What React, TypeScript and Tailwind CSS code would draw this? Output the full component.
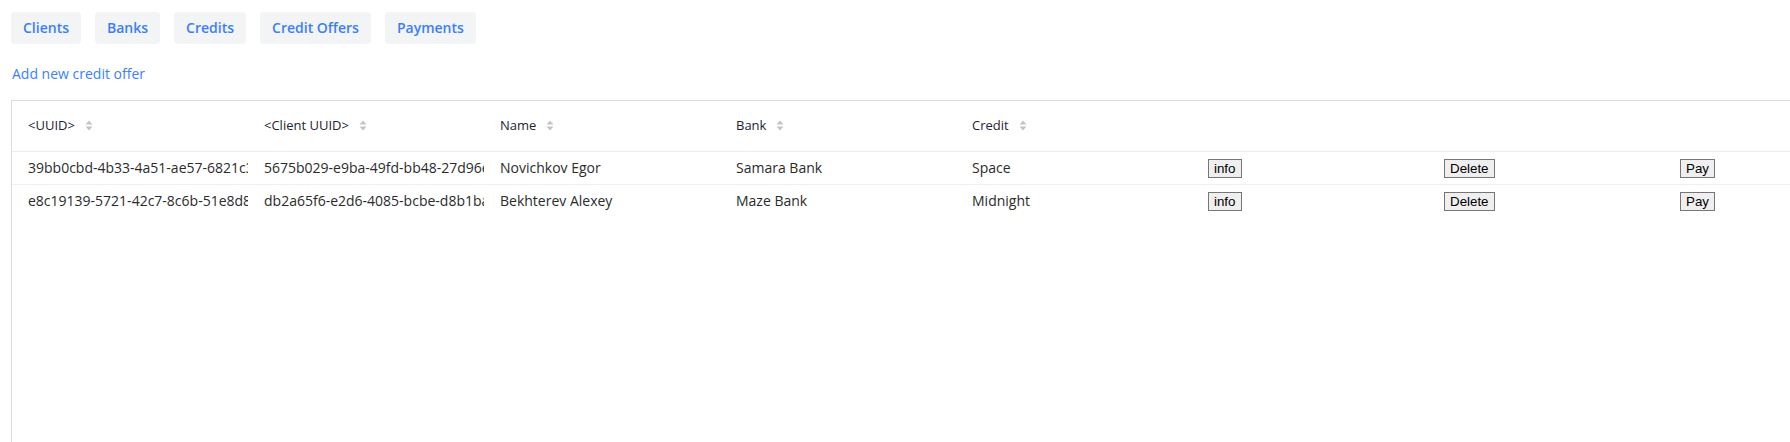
type Offer = {
  uuid: string
  clientUuid: string
  name: string
  bank: string
  credit: string
}

const offers: Offer[] = [
  {
    uuid: "39bb0cbd-4b33-4a51-ae57-6821c3a1f0d2",
    clientUuid: "5675b029-e9ba-49fd-bb48-27d96e3c4b1a",
    name: "Novichkov Egor",
    bank: "Samara Bank",
    credit: "Space",
  },
  {
    uuid: "e8c19139-5721-42c7-8c6b-51e8d8f2a7c4",
    clientUuid: "db2a65f6-e2d6-4085-bcbe-d8b1ba90e3f7",
    name: "Bekhterev Alexey",
    bank: "Maze Bank",
    credit: "Midnight",
  },
]

const navItems = ["Clients", "Banks", "Credits", "Credit Offers", "Payments"]
const columns = ["<UUID>", "<Client UUID>", "Name", "Bank", "Credit"]

function SortIcon() {
  return (
    <svg width="8" height="11" viewBox="0 0 8 11" className="ml-[10px] shrink-0">
      <path d="M4 0.5 L7.5 4.5 L0.5 4.5 Z" fill="#c4c4c4" />
      <path d="M4 10.5 L7.5 6.5 L0.5 6.5 Z" fill="#c4c4c4" />
    </svg>
  )
}

function PlainButton({ label }: { label: string }) {
  return (
    <button className="bg-[#efefef] border border-[#767676] px-[5px] py-px text-[13.33px] leading-[15px] text-black font-['Liberation_Sans',Arial,sans-serif]">
      {label}
    </button>
  )
}

export default function App() {
  return (
    <div className="h-[442px] overflow-hidden bg-white font-['Segoe_UI','Open_Sans',sans-serif]">
      <div className="pl-[11px] pt-[12px]">
        <nav className="flex gap-[14px]">
          {navItems.map((item) => (
            <button
              key={item}
              className="h-8 px-3 rounded bg-[#f3f4f6] text-sm font-semibold text-[#3b7ff6]"
            >
              {item}
            </button>
          ))}
        </nav>

        <div className="mt-[20px] pl-px text-sm leading-5">
          <a className="block w-fit text-[#3b82f6] cursor-pointer">Add new credit offer</a>
        </div>

        <div className="mt-[16px] w-[1900px] h-[400px] border-l border-t border-[#dcdcdc]">
          <table className="table-fixed w-[1888px] border-collapse">
            <colgroup>
              {Array.from({ length: 8 }).map((_, i) => (
                <col key={i} className="w-[236px]" />
              ))}
            </colgroup>
            <thead>
              <tr className="border-b border-[#ededed]">
                {columns.map((c) => (
                  <th key={c} className="h-[50px] px-4 text-left font-normal text-[13px] text-[#1d2433]">
                    <div className="flex items-center">
                      <span>{c}</span>
                      <SortIcon />
                    </div>
                  </th>
                ))}
                <th />
                <th />
                <th />
              </tr>
            </thead>
            <tbody className="divide-y divide-[#f0f0f0]">
              {offers.map((o) => (
                <tr key={o.uuid} className="text-sm text-[#2b2b2b]">
                  <td className="px-4 py-[6px] leading-5 whitespace-nowrap overflow-hidden">{o.uuid}</td>
                  <td className="px-4 py-[6px] leading-5 whitespace-nowrap overflow-hidden">{o.clientUuid}</td>
                  <td className="px-4 py-[6px] leading-5 whitespace-nowrap overflow-hidden">{o.name}</td>
                  <td className="px-4 py-[6px] leading-5 whitespace-nowrap overflow-hidden">{o.bank}</td>
                  <td className="px-4 py-[6px] leading-5 whitespace-nowrap overflow-hidden">{o.credit}</td>
                  <td className="px-4 py-[6px]">
                    <PlainButton label="info" />
                  </td>
                  <td className="px-4 py-[6px]">
                    <PlainButton label="Delete" />
                  </td>
                  <td className="px-4 py-[6px]">
                    <PlainButton label="Pay" />
                  </td>
                </tr>
              ))}
            </tbody>
          </table>
        </div>
      </div>
    </div>
  )
}
